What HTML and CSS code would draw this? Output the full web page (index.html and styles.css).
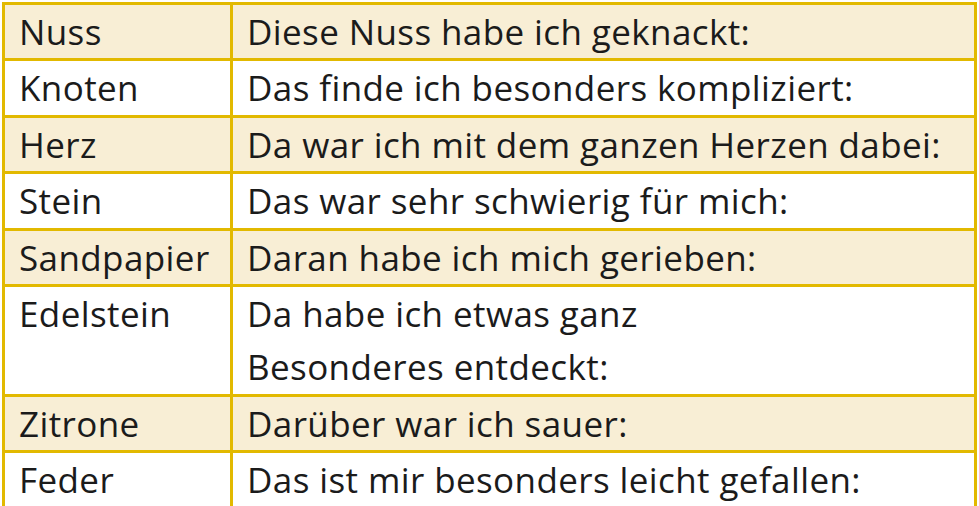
FILE: index.html
```html
<!DOCTYPE html>
<html lang="de">
<head>
<meta charset="utf-8">
<title>Tabelle</title>
<link rel="stylesheet" href="styles.css">
</head>
<body>
<table class="grid">
  <colgroup><col class="c1"><col class="c2"></colgroup>
  <tr class="shade"><td>Nuss</td><td>Diese Nuss habe ich geknackt:</td></tr>
  <tr><td>Knoten</td><td>Das finde ich besonders kompliziert:</td></tr>
  <tr class="shade"><td>Herz</td><td>Da war ich mit dem ganzen Herzen dabei:</td></tr>
  <tr><td>Stein</td><td>Das war sehr schwierig für mich:</td></tr>
  <tr class="shade"><td>Sandpapier</td><td>Daran habe ich mich gerieben:</td></tr>
  <tr><td>Edelstein</td><td>Da habe ich etwas ganz<br>Besonderes entdeckt:</td></tr>
  <tr class="shade"><td>Zitrone</td><td>Darüber war ich sauer:</td></tr>
  <tr><td>Feder</td><td>Das ist mir besonders leicht gefallen:</td></tr>
</table>
</body>
</html>
```
FILE: styles.css
```css
html, body {
  margin: 0;
  padding: 0;
  background: #ffffff;
}
body {
  padding: 2px 0 0 2px;
}
.grid {
  border-collapse: collapse;
  width: 975px;
  table-layout: fixed;
  font-family: "Open Sans", "DejaVu Sans", sans-serif;
  font-size: 35px;
  letter-spacing: 0.4px;
  color: #1b1b1b;
}
.c1 { width: 228px; }
.grid td {
  border: 3px solid #e2b900;
  padding: 0 0 0 14px;
  line-height: 53.4px;
  vertical-align: top;
  white-space: nowrap;
}
.shade td {
  background: #f8eed5;
}
```
